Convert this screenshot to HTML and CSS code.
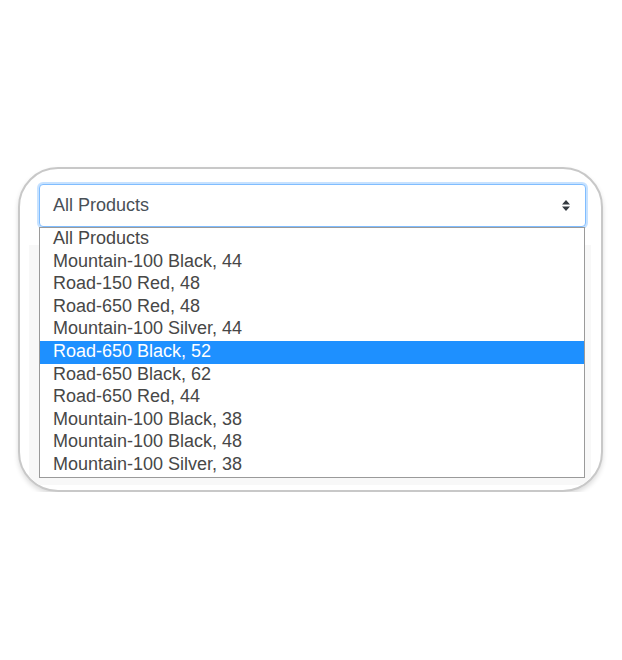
FILE: index.html
```html
<!DOCTYPE html>
<html>
<head>
<meta charset="utf-8">
<link rel="stylesheet" href="styles.css">
</head>
<body>
<div class="page">
  <div class="card">
    <div class="select-wrap">
      <div class="select">
        <span class="select-value">All Products</span>
        <svg class="caret" width="10" height="13" viewBox="0 0 10 13"><path d="M1 5.5 L5 1 L9 5.5 Z M1 7.5 L5 12 L9 7.5 Z" fill="#343a40"/></svg>
      </div>
      <ul class="options">
        <li>All Products</li>
        <li>Mountain-100 Black, 44</li>
        <li>Road-150 Red, 48</li>
        <li>Road-650 Red, 48</li>
        <li>Mountain-100 Silver, 44</li>
        <li class="selected">Road-650 Black, 52</li>
        <li>Road-650 Black, 62</li>
        <li>Road-650 Red, 44</li>
        <li>Mountain-100 Black, 38</li>
        <li>Mountain-100 Black, 48</li>
        <li>Mountain-100 Silver, 38</li>
      </ul>
    </div>
    <div class="panel"></div>
  </div>
</div>
</body>
</html>
```
FILE: styles.css
```css
html, body {
  margin: 0;
  padding: 0;
  background: #fff;
}
.page {
  padding: 167px 0 0 18px;
}
.card {
  box-sizing: border-box;
  width: 585px;
  height: 325px;
  border: 2px solid #c8c8c8;
  border-radius: 40px;
  box-shadow: 0 3px 5px rgba(0,0,0,0.14);
  padding: 15px 15px 0 19px;
  background: #fff;
  overflow: hidden;
}
.select-wrap {
  position: relative;
  width: 547px;
}
.select {
  box-sizing: border-box;
  height: 43px;
  border: 1px solid #80bdff;
  border-radius: 4px;
  box-shadow: 0 0 0 2px rgba(0,123,255,0.22);
  display: flex;
  align-items: center;
  justify-content: space-between;
  padding: 0 14px 0 13px;
  font-family: "Liberation Sans", Arial, sans-serif;
  font-size: 18px;
  color: #495057;
  background: #fff;
}
.caret {
  display: block;
}
.options {
  position: absolute;
  top: 43px;
  left: 0;
  z-index: 2;
  box-sizing: border-box;
  width: 546px;
  margin: 0;
  padding: 0;
  list-style: none;
  border: 1px solid #9a9a9a;
  background: #fff;
  font-family: "Liberation Sans", Arial, sans-serif;
  font-size: 18px;
  color: #474747;
}
.options li {
  box-sizing: border-box;
  height: 22.6px;
  line-height: 20.5px;
  padding-left: 13px;
  white-space: nowrap;
}
.options li.selected {
  background: #1e90ff;
  color: #fff;
}
.panel {
  margin: 18px 0 0 -10px;
  width: 562px;
  height: 240px;
  background: #f8f8f8;
}
```
